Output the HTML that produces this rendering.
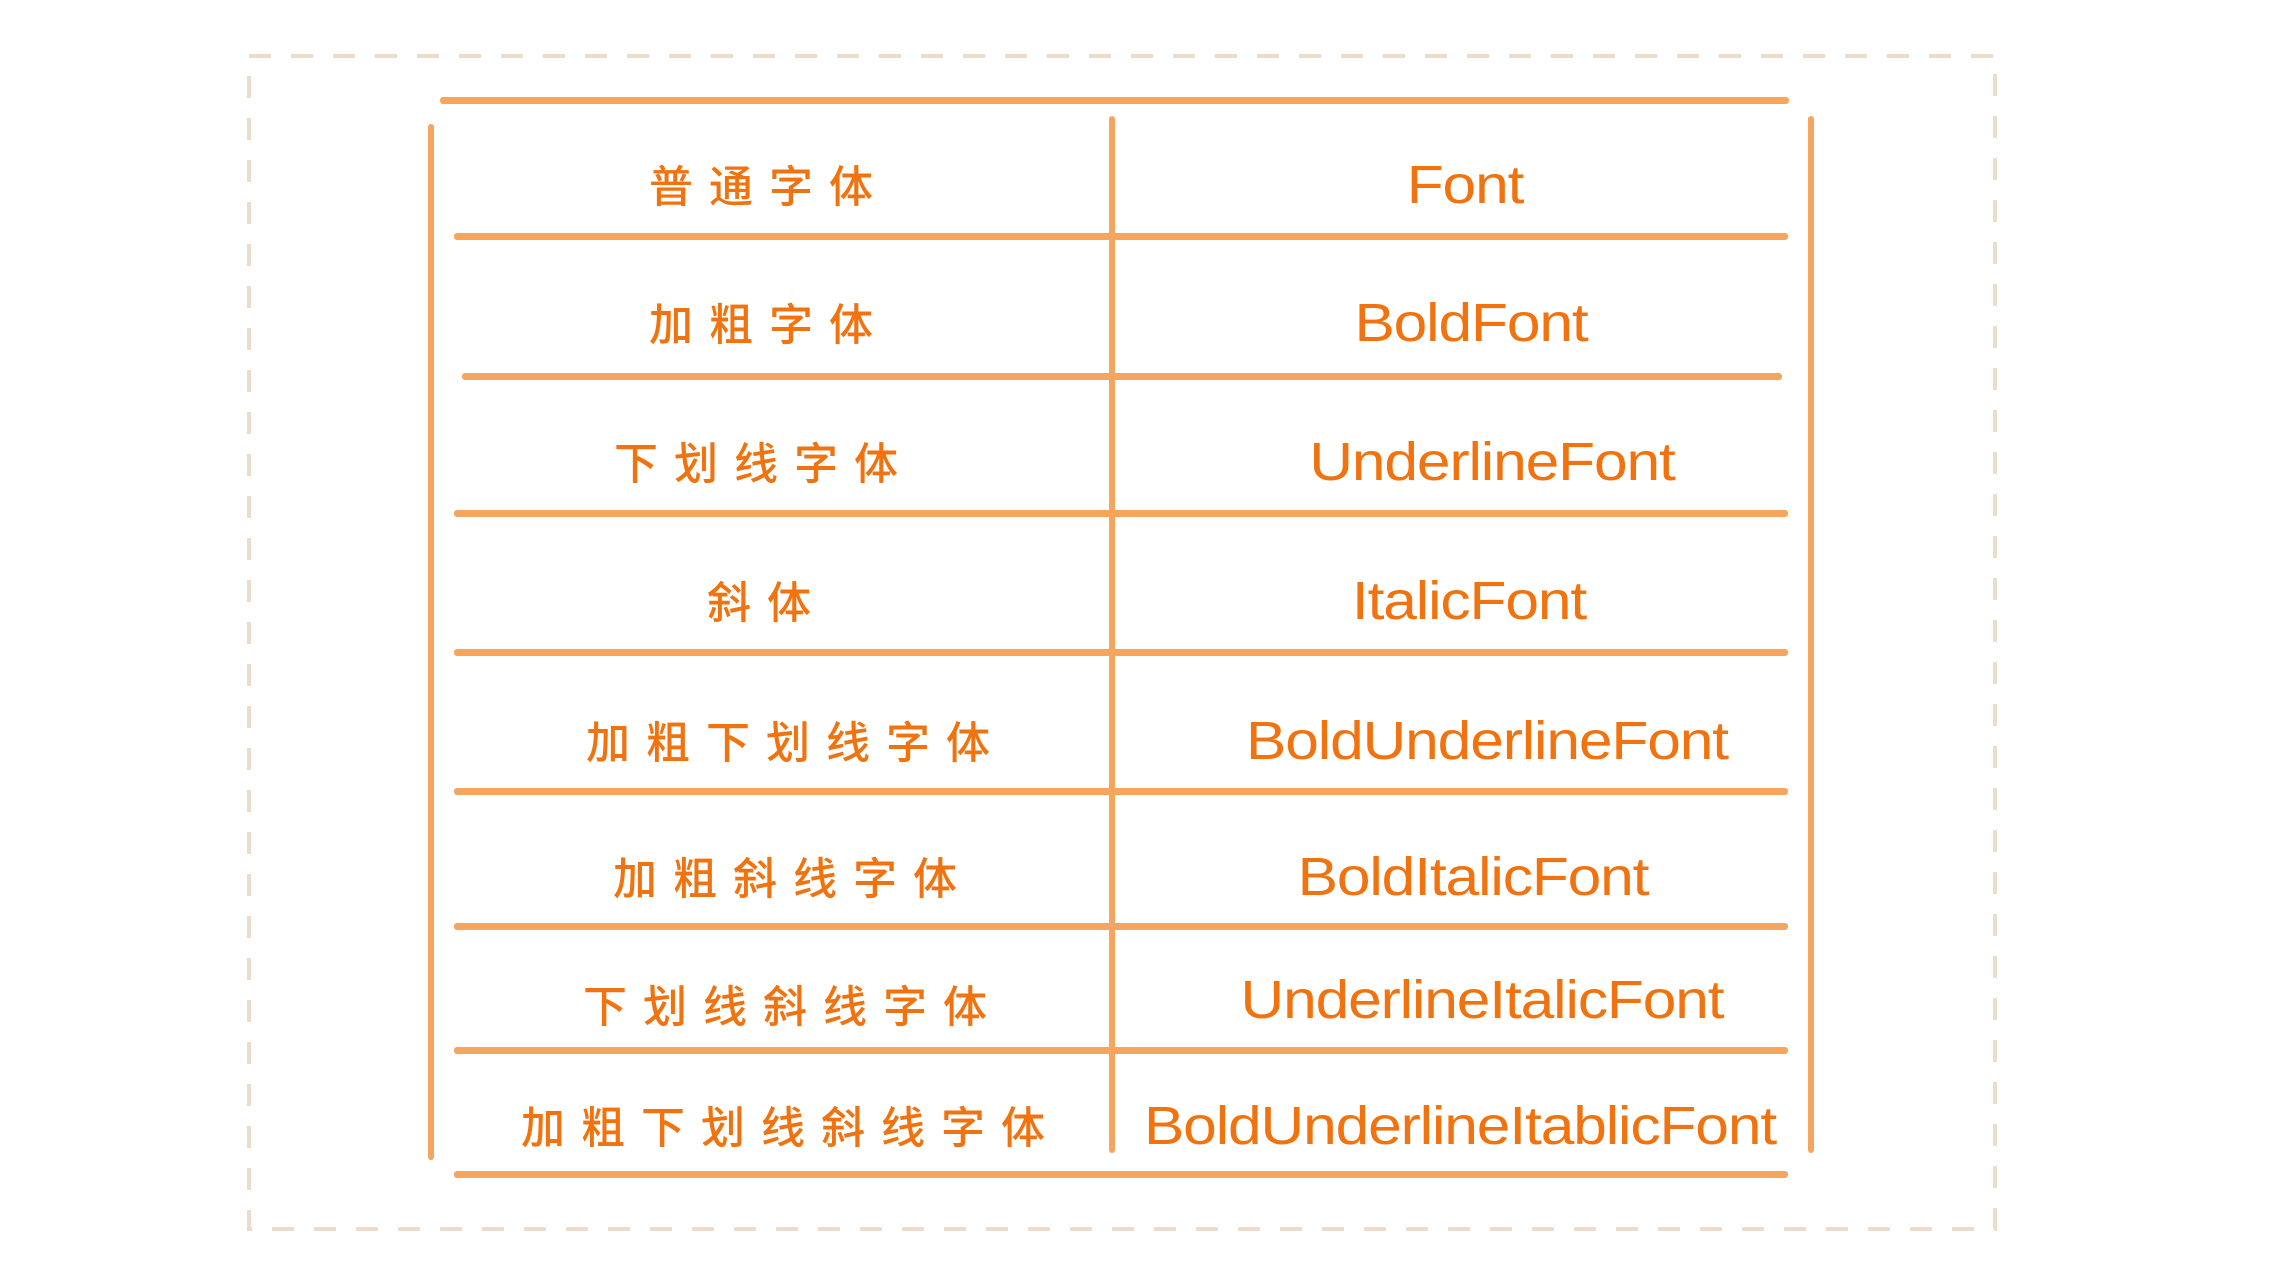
<!DOCTYPE html>
<html><head><meta charset="utf-8"><style>
html,body{margin:0;padding:0;background:#fff;}
body{width:2284px;height:1285px;position:relative;overflow:hidden;}
svg.d{position:absolute;left:0;top:0;}
.h{position:absolute;height:7px;background:#f6a55f;border-radius:3px;}
.v{position:absolute;width:6px;background:#f6a55f;border-radius:3px;}
.t{position:absolute;white-space:nowrap;color:#f0730f;}
.cn{transform:translate(-50%,-50%);font-family:"Liberation Sans","Noto Sans CJK SC",sans-serif;font-size:44px;letter-spacing:16px;font-weight:500;}
.en{transform:translate(-50%,-50%) scaleX(1.12);font-family:"Liberation Sans",sans-serif;font-size:54px;letter-spacing:-1px;}
</style></head><body>
<svg class="d" width="2284" height="1285"><rect x="249" y="56" width="1746" height="1173" fill="none" stroke="#ecdccb" stroke-width="4" stroke-dasharray="22 20"/></svg>
<div class="h" style="left:440px;top:97px;width:1349px"></div>
<div class="v" style="left:428px;top:124px;height:1036px"></div>
<div class="v" style="left:1109px;top:116px;height:1037px"></div>
<div class="v" style="left:1808px;top:116px;height:1037px"></div>
<div class="h" style="left:454px;top:233px;width:1334px"></div>
<div class="h" style="left:462px;top:373px;width:1320px"></div>
<div class="h" style="left:454px;top:510px;width:1334px"></div>
<div class="h" style="left:454px;top:649px;width:1334px"></div>
<div class="h" style="left:454px;top:788px;width:1334px"></div>
<div class="h" style="left:454px;top:923px;width:1334px"></div>
<div class="h" style="left:454px;top:1047px;width:1334px"></div>
<div class="h" style="left:454px;top:1171px;width:1334px"></div>

<div class="t cn" style="left:769px;top:183px">普通字体</div>
<div class="t cn" style="left:769px;top:321px">加粗字体</div>
<div class="t cn" style="left:764px;top:460px">下划线字体</div>
<div class="t cn" style="left:767px;top:599px">斜体</div>
<div class="t cn" style="left:796px;top:739px">加粗下划线字体</div>
<div class="t cn" style="left:793px;top:875px">加粗斜线字体</div>
<div class="t cn" style="left:793px;top:1003px">下划线斜线字体</div>
<div class="t cn" style="left:791px;top:1124px">加粗下划线斜线字体</div>

<div class="t en" style="left:1465px;top:185px">Font</div>
<div class="t en" style="left:1471px;top:323px">BoldFont</div>
<div class="t en" style="left:1492px;top:462px">UnderlineFont</div>
<div class="t en" style="left:1469px;top:601px">ItalicFont</div>
<div class="t en" style="left:1487px;top:741px">BoldUnderlineFont</div>
<div class="t en" style="left:1473px;top:877px">BoldItalicFont</div>
<div class="t en" style="left:1482px;top:1000px">UnderlineItalicFont</div>
<div class="t en" style="left:1460px;top:1126px">BoldUnderlineItablicFont</div>
</body></html>
